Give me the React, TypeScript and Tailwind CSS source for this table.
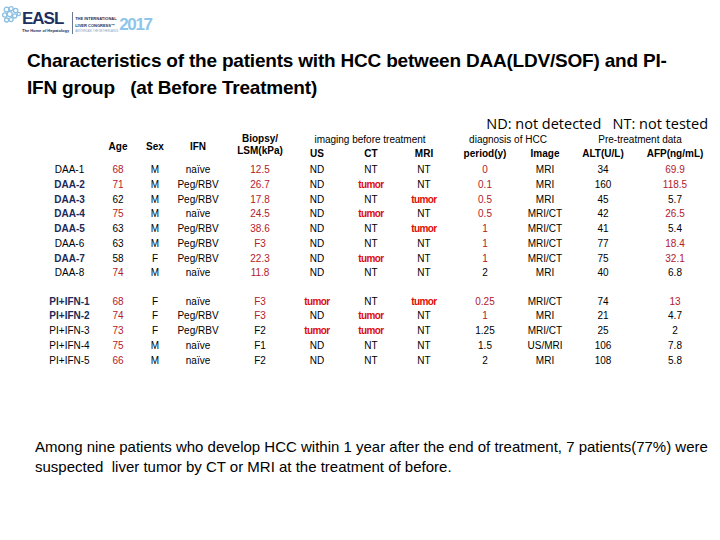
import React from "react";

type Cell = string | { v: string; c?: "red" | "tumor" };

type Row = {
  name: string;
  blue?: boolean;
  cells: Cell[];
};

const r = (v: string): Cell => ({ v, c: "red" });
const T: Cell = { v: "tumor", c: "tumor" };

const daaRows: Row[] = [
  { name: "DAA-1", cells: [r("68"), "M", "naïve", r("12.5"), "ND", "NT", "NT", r("0"), "MRI", "34", r("69.9")] },
  { name: "DAA-2", blue: true, cells: [r("71"), "M", "Peg/RBV", r("26.7"), "ND", T, "NT", r("0.1"), "MRI", "160", r("118.5")] },
  { name: "DAA-3", blue: true, cells: ["62", "M", "Peg/RBV", r("17.8"), "ND", "NT", T, r("0.5"), "MRI", "45", "5.7"] },
  { name: "DAA-4", blue: true, cells: [r("75"), "M", "naïve", r("24.5"), "ND", T, "NT", r("0.5"), "MRI/CT", "42", r("26.5")] },
  { name: "DAA-5", blue: true, cells: ["63", "M", "Peg/RBV", r("38.6"), "ND", "NT", T, r("1"), "MRI/CT", "41", "5.4"] },
  { name: "DAA-6", cells: ["63", "M", "Peg/RBV", r("F3"), "ND", "NT", "NT", r("1"), "MRI/CT", "77", r("18.4")] },
  { name: "DAA-7", blue: true, cells: ["58", "F", "Peg/RBV", r("22.3"), "ND", T, "NT", r("1"), "MRI/CT", "75", r("32.1")] },
  { name: "DAA-8", cells: [r("74"), "M", "naïve", r("11.8"), "ND", "NT", "NT", "2", "MRI", "40", "6.8"] },
];

const piRows: Row[] = [
  { name: "PI+IFN-1", blue: true, cells: [r("68"), "F", "naïve", r("F3"), T, "NT", T, r("0.25"), "MRI/CT", "74", r("13")] },
  { name: "PI+IFN-2", blue: true, cells: [r("74"), "F", "Peg/RBV", r("F3"), "ND", T, "NT", r("1"), "MRI", "21", "4.7"] },
  { name: "PI+IFN-3", cells: [r("73"), "F", "Peg/RBV", "F2", T, T, "NT", "1.25", "MRI/CT", "25", "2"] },
  { name: "PI+IFN-4", cells: [r("75"), "M", "naïve", "F1", "ND", "NT", "NT", "1.5", "US/MRI", "106", "7.8"] },
  { name: "PI+IFN-5", cells: [r("66"), "M", "naïve", "F2", "ND", "NT", "NT", "2", "MRI", "108", "5.8"] },
];

const GRID =
  "grid grid-cols-[49px_48px_26px_60px_64px_50px_58px_48px_74px_46px_70px_74px]";

function DataCell({ cell }: { cell: Cell }) {
  if (typeof cell === "string") {
    return <div className="text-center text-black">{cell}</div>;
  }
  if (cell.c === "tumor") {
    return <div className="text-center font-bold tracking-[-0.6px] text-[#e00b0b]">{cell.v}</div>;
  }
  return <div className="text-center text-[#b3202c]">{cell.v}</div>;
}

function TableRows({ rows }: { rows: Row[] }) {
  return (
    <div>
      {rows.map((row) => (
        <div key={row.name} className={`${GRID} h-[14.75px] items-center`}>
          <div
            className={
              row.blue
                ? "text-center font-bold text-[#1b2a57]"
                : "text-center text-black"
            }
          >
            {row.name}
          </div>
          {row.cells.map((cell, i) => (
            <DataCell key={i} cell={cell} />
          ))}
        </div>
      ))}
    </div>
  );
}

function Logo() {
  return (
    <div className="flex h-[38px] items-start pl-[2px] pt-[4px]">
      <svg width="20" height="20" viewBox="0 0 22 20" className="mt-[1px]">
        {[
          [5, 4, 2.6],
          [10, 3, 2.2],
          [15, 5, 2.4],
          [3, 10, 2.4],
          [8.5, 9, 2.8],
          [14, 11, 2.3],
          [5, 15.5, 2.2],
          [10, 15, 2.2],
          [18.5, 9, 1.8],
        ].map(([cx, cy, rr], i) => (
          <circle key={i} cx={cx} cy={cy} r={rr} fill="none" stroke="#8cbfe2" strokeWidth="1.4" />
        ))}
      </svg>
      <div className="flex flex-col">
        <div className="mt-[6px] text-[17px] font-black leading-[18px] tracking-[-1px] text-[#20305e]">
          EASL
        </div>
        <div className="text-[4px] font-bold leading-[6px] text-[#20305e]">
          The Home of Hepatology
        </div>
      </div>
      <div className="ml-[3px] mt-[8px] h-[22px] w-px bg-[#6b7794]" />
      <div className="ml-[2px] mt-[11px] flex flex-col text-[4px] font-bold leading-[7px] text-[#20305e]">
        <div>THE INTERNATIONAL</div>
        <div>LIVER CONGRESS™</div>
        <div className="text-[2.6px] font-normal leading-[5px] text-[#8aa0c0]">
          AMSTERDAM, THE NETHERLANDS
        </div>
      </div>
      <div className="ml-[1px] mt-[11px] text-[17px] font-extrabold leading-[20px] tracking-[-1.4px] text-[#8ec5ea]">
        2017
      </div>
    </div>
  );
}

export default function App() {
  return (
    <div className="h-[540px] w-[720px] overflow-hidden bg-white font-['Liberation_Sans',sans-serif]">
      <Logo />

      <div className="ml-[27px] mt-[9px] text-[19px] font-bold leading-[27px] tracking-[-0.2px] text-black">
        <div>Characteristics of the patients with HCC between DAA(LDV/SOF) and PI-</div>
        <div>IFN group&nbsp;&nbsp;&nbsp;(at Before Treatment)</div>
      </div>

      <div className="mt-[14px] flex justify-end pr-[12px] font-['Open_Sans',sans-serif] text-[14.5px] leading-[18px] text-black">
        ND: not detected&nbsp;&nbsp;&nbsp;NT: not tested
      </div>

      <div className="ml-[45px] mt-[-1px] text-[10px]">
        <div className={`${GRID} grid-rows-[14px_14px] items-center`}>
          <div className="row-span-2" />
          <div className="row-span-2 text-center font-bold">Age</div>
          <div className="row-span-2 text-center font-bold">Sex</div>
          <div className="row-span-2 text-center font-bold">IFN</div>
          <div className="row-span-2 mt-[-2px] text-center font-bold leading-[12px]">
            Biopsy/
            <br />
            LSM(kPa)
          </div>
          <div className="col-span-3 text-center text-black">imaging before treatment</div>
          <div className="col-span-2 text-center text-black">diagnosis of HCC</div>
          <div className="col-span-2 text-center text-black">Pre-treatment data</div>
          <div className="text-center font-bold">US</div>
          <div className="text-center font-bold">CT</div>
          <div className="text-center font-bold">MRI</div>
          <div className="text-center font-bold">period(y)</div>
          <div className="text-center font-bold">Image</div>
          <div className="text-center font-bold">ALT(U/L)</div>
          <div className="text-center font-bold">AFP(ng/mL)</div>
        </div>

        <div className="mt-[2px]">
          <TableRows rows={daaRows} />
        </div>
        <div className="mt-[13.5px]">
          <TableRows rows={piRows} />
        </div>
      </div>

      <div className="ml-[35px] mt-[70px] text-[15px] leading-[20px] text-black">
        <div>
          Among nine patients who develop HCC within 1 year after the end of treatment, 7 patients(77%) were
        </div>
        <div>suspected&nbsp; liver tumor by CT or MRI at the treatment of before.</div>
      </div>
    </div>
  );
}
